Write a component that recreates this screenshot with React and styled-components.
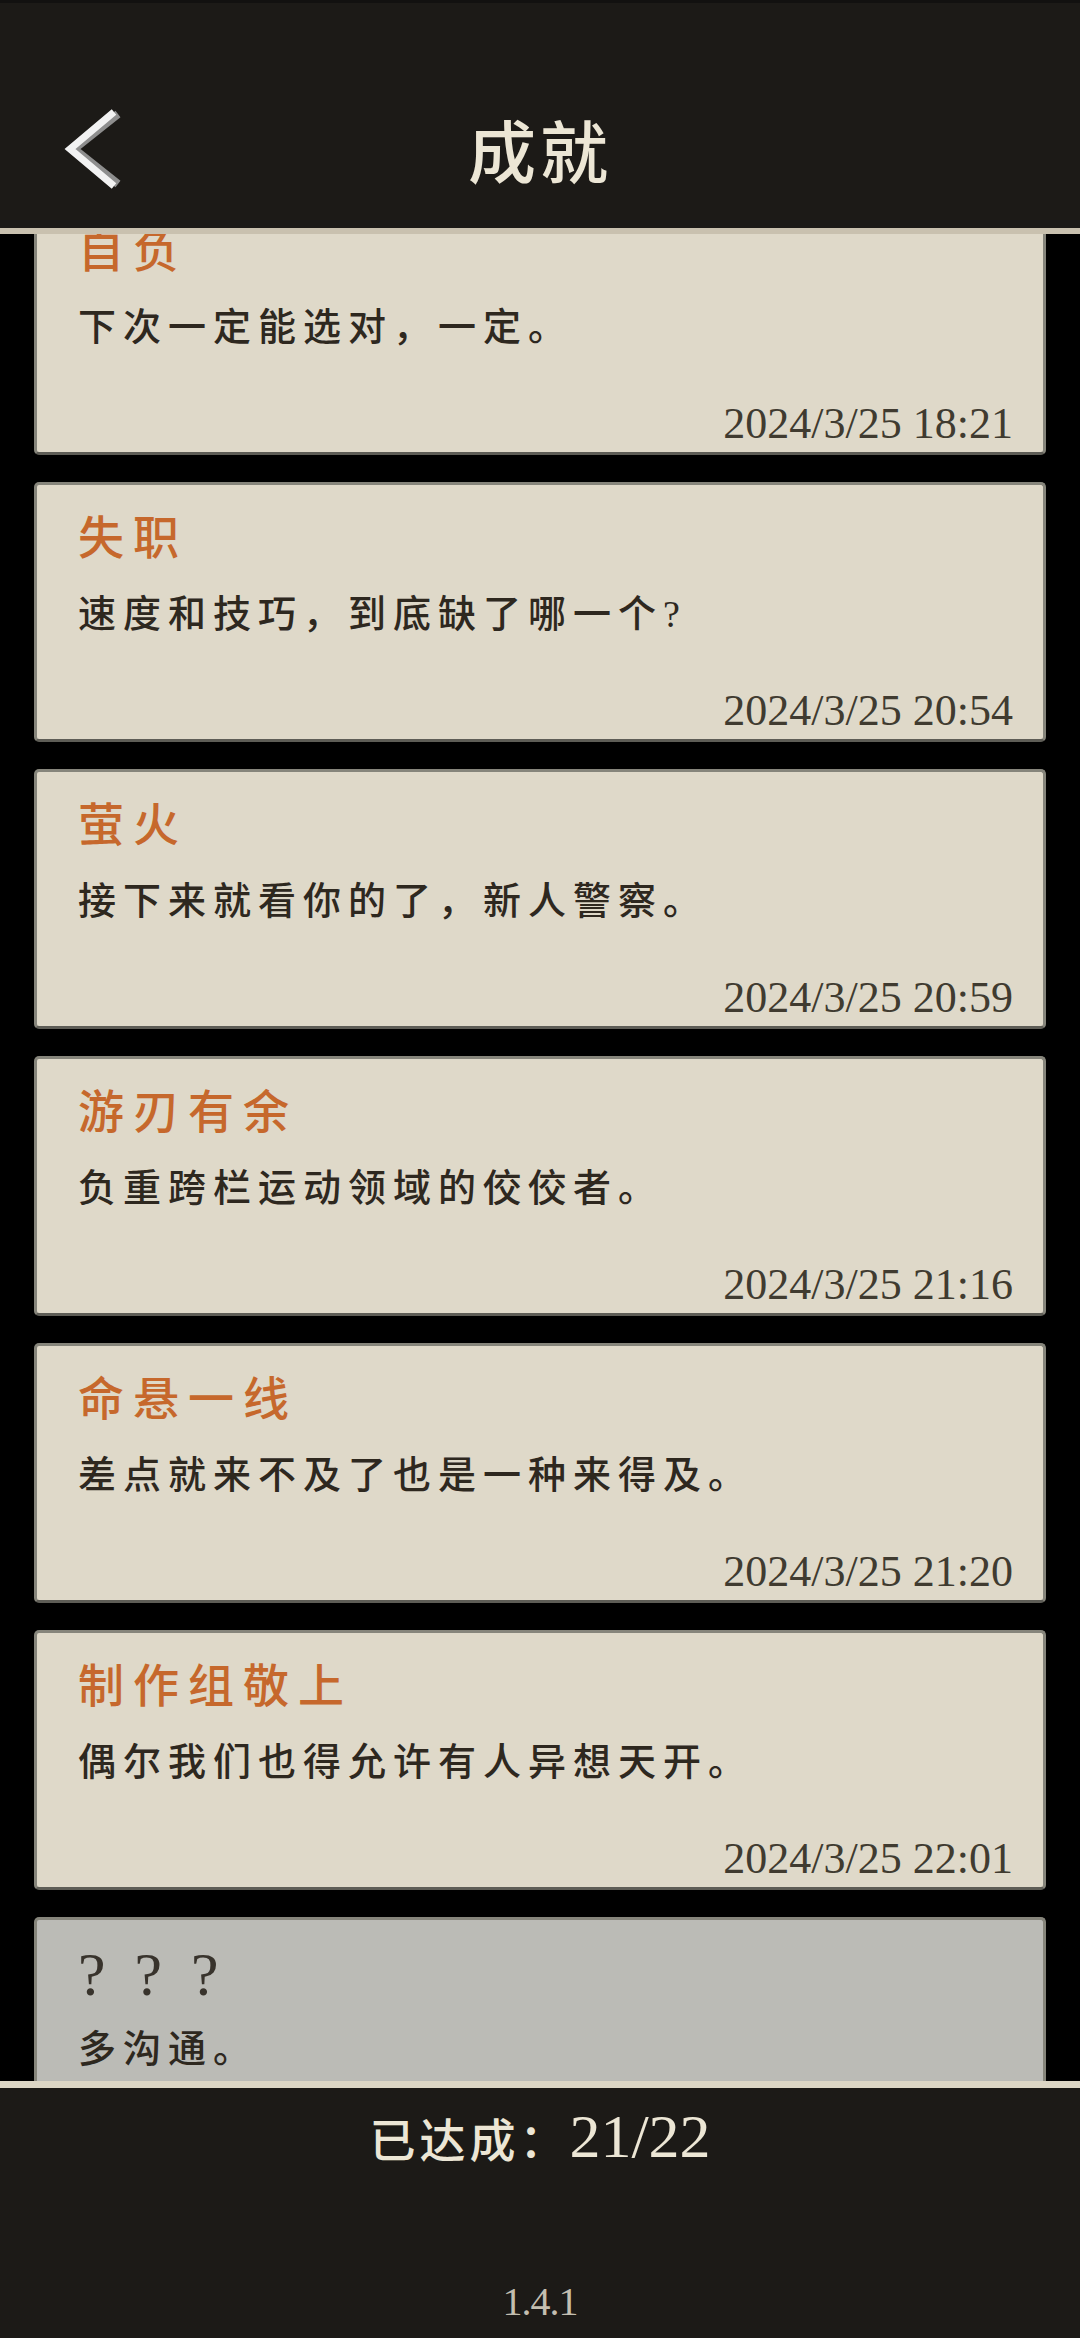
import React, { useLayoutEffect, useRef } from "react";
import styled, { createGlobalStyle } from "styled-components";

const GlobalStyle = createGlobalStyle`
    html, body {
        margin: 0;
        padding: 0;
        height: 100%;
        background: #000;
    }
    #root {
        height: 100%;
    }
`;

const cream = "#ece6d5";
const orange = "#c6682c";
const ink = "#2e281f";
const mixed = `"Liberation Serif", "Noto Sans CJK SC", serif`;

const Screen = styled.div`
    height: 100vh;
    display: flex;
    flex-direction: column;
    background: #000;
    overflow: hidden;
    font-family: ${mixed};
`;

const Header = styled.header`
    flex: none;
    height: 234px;
    box-sizing: border-box;
    background: #1c1a17;
    border-top: 3px solid #121110;
    border-bottom: 6px solid #c9c1af;
    padding-top: 72px;
    display: grid;
    grid-template-columns: 1fr auto 1fr;
    grid-template-rows: 148px;
    align-items: center;
`;

const BackButton = styled.button`
    justify-self: start;
    margin-left: 52px;
    padding: 0;
    border: 0;
    background: none;
    width: 70px;
    height: 90px;
    display: block;
`;

const Title = styled.h1`
    margin: 0;
    font-family: "Noto Sans CJK SC", sans-serif;
    font-weight: 500;
    font-size: 68px;
    line-height: 1;
    letter-spacing: 4px;
    color: ${cream};
`;

const List = styled.main`
    flex: 1;
    min-height: 0;
    overflow-y: auto;
    padding: 28px 34px;
    display: flex;
    flex-direction: column;
    gap: 27px;
    scrollbar-width: none;
    &::-webkit-scrollbar { display: none; }
`;

const Card = styled.article`
    flex: none;
    height: 260px;
    box-sizing: border-box;
    background: ${props => props.locked ? "#bbbbb6" : "#dfd9c9"};
    border: 3px solid #86857b;
    border-bottom-color: #5e5d56;
    border-radius: 5px;
    padding: 26px 30px 6px 41px;
    display: flex;
    flex-direction: column;
`;

const CardTitle = styled.div`
    font-size: ${props => props.locked ? "62px" : "46px"};
    font-weight: 500;
    line-height: 56px;
    letter-spacing: ${props => props.locked ? "29px" : "9px"};
    color: ${props => props.locked ? "#38332c" : orange};
`;

const CardText = styled.div`
    margin-top: 22px;
    font-size: 38px;
    font-weight: 500;
    line-height: 50px;
    letter-spacing: 7px;
    color: ${ink};
`;

const Stamp = styled.div`
    margin-top: auto;
    align-self: flex-end;
    font-family: "Liberation Serif", serif;
    font-size: 44px;
    line-height: 44px;
    color: #403b30;
`;

const Footer = styled.footer`
    flex: none;
    height: 257px;
    box-sizing: border-box;
    background: #1c1a17;
    border-top: 7px solid #dcd6c5;
    padding-top: 13px;
    display: flex;
    flex-direction: column;
    align-items: center;
`;

const Progress = styled.div`
    font-size: 46px;
    font-weight: 500;
    line-height: 70px;
    letter-spacing: 4px;
    color: ${cream};
`;

const Count = styled.span`
    font-family: "Liberation Serif", serif;
    font-size: 62px;
    letter-spacing: 0;
`;

const Version = styled.div`
    margin-top: auto;
    margin-bottom: 14px;
    font-family: "Liberation Serif", serif;
    font-size: 40px;
    line-height: 44px;
    letter-spacing: -1px;
    color: #c3beb0;
`;

const achievements = [
    { title: "自负", text: "下次一定能选对，一定。", time: "2024/3/25 18:21" },
    { title: "失职", text: "速度和技巧，到底缺了哪一个?", time: "2024/3/25 20:54" },
    { title: "萤火", text: "接下来就看你的了，新人警察。", time: "2024/3/25 20:59" },
    { title: "游刃有余", text: "负重跨栏运动领域的佼佼者。", time: "2024/3/25 21:16" },
    { title: "命悬一线", text: "差点就来不及了也是一种来得及。", time: "2024/3/25 21:20" },
    { title: "制作组敬上", text: "偶尔我们也得允许有人异想天开。", time: "2024/3/25 22:01" },
    { title: "???", text: "多沟通。", locked: true }
];

const Chevron = () => (
    <svg width="70" height="90" viewBox="0 0 70 90">
        <polyline points="66,10 22,45 66,80" fill="none" stroke="#8e8e8e" strokeWidth="8" />
        <polyline points="62,8 18,45 62,82" fill="none" stroke="#f2f2f2" strokeWidth="7" />
    </svg>
);

export default function App() {
    const listRef = useRef(null);

    useLayoutEffect(() => {
        if (listRef.current) listRef.current.scrollTop = 67;
    }, []);

    return (
        <Screen>
            <GlobalStyle />
            <Header>
                <BackButton aria-label="返回"><Chevron /></BackButton>
                <Title>成就</Title>
                <div />
            </Header>
            <List ref={listRef}>
                {achievements.map((a, i) => (
                    <Card key={`ach-${i}`} locked={a.locked}>
                        <CardTitle locked={a.locked}>{a.title}</CardTitle>
                        <CardText>{a.text}</CardText>
                        {a.time && <Stamp>{a.time}</Stamp>}
                    </Card>
                ))}
            </List>
            <Footer>
                <Progress>已达成：<Count>21/22</Count></Progress>
                <Version>1.4.1</Version>
            </Footer>
        </Screen>
    );
}
